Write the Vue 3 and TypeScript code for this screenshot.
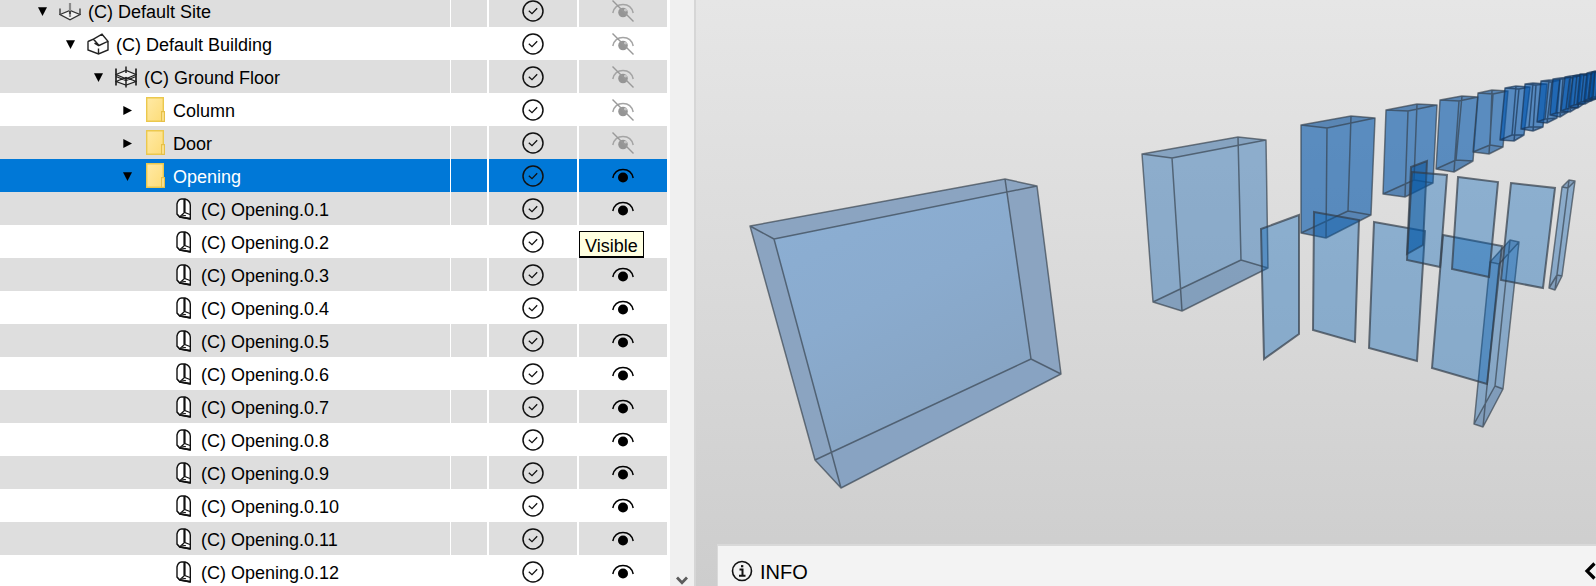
<script setup lang="ts">
import { onMounted, ref } from 'vue'

type Kind = 'site' | 'building' | 'floor' | 'folder' | 'opening'
type Point = [number, number]

interface Row {
  label: string
  level: number
  kind: Kind
  expanded?: boolean
  visible: boolean
  selected?: boolean
  hint?: string
}

const rows: Row[] = [
  { label: '(C) Default Site', level: 0, kind: 'site', expanded: true, visible: false },
  { label: '(C) Default Building', level: 1, kind: 'building', expanded: true, visible: false },
  { label: '(C) Ground Floor', level: 2, kind: 'floor', expanded: true, visible: false },
  { label: 'Column', level: 3, kind: 'folder', expanded: false, visible: false },
  { label: 'Door', level: 3, kind: 'folder', expanded: false, visible: false },
  { label: 'Opening', level: 3, kind: 'folder', expanded: true, visible: true, selected: true },
  ...Array.from({ length: 12 }, (_, i): Row => ({
    label: `(C) Opening.0.${i + 1}`,
    level: 4,
    kind: 'opening',
    visible: true,
    hint: i === 1 ? 'Visible' : undefined,
  })),
]

const tree = ref<HTMLElement | null>(null)
onMounted(() => {
  if (tree.value) tree.value.scrollTop = 6
})

// Corner order: left, front, right, back - first the top face, then the bottom face.
interface Box {
  top: [Point, Point, Point, Point]
  bottom: [Point, Point, Point, Point]
  tone: 'light' | 'deep' | 'far'
}

const boxes: Box[] = [
  { tone: 'light', top: [[1142, 154], [1172, 158], [1266, 140], [1238, 137]], bottom: [[1153, 302], [1182, 311], [1268, 268], [1241, 260]] },
  { tone: 'deep', top: [[1301, 125], [1327, 128], [1375, 118], [1351, 116]], bottom: [[1301, 233], [1326, 238], [1371, 215], [1348, 211]] },
  { tone: 'deep', top: [[1386, 110], [1408, 111], [1437, 105], [1417, 104]], bottom: [[1383, 194], [1405, 197], [1433, 183], [1414, 180]] },
  { tone: 'deep', top: [[1440, 100], [1459, 101], [1478, 97], [1462, 96]], bottom: [[1436, 169], [1454, 172], [1473, 161], [1456, 160]] },
  { tone: 'deep', top: [[1478, 93], [1493, 94], [1508, 91], [1492, 90]], bottom: [[1473, 152], [1489, 154], [1503, 147], [1490, 145]] },
  { tone: 'far', top: [[1505, 88], [1519, 89], [1530, 87], [1516, 86]], bottom: [[1500, 140], [1514, 141], [1524, 135], [1512, 135]] },
  { tone: 'far', top: [[1525, 84], [1536, 85], [1547, 84], [1533, 83]], bottom: [[1521, 129], [1533, 131], [1543, 127], [1529, 127]] },
  { tone: 'far', top: [[1541, 81], [1552, 82], [1560, 80], [1549, 80]], bottom: [[1537, 122], [1547, 123], [1557, 118], [1545, 119]] },
  { tone: 'far', top: [[1553, 79], [1563, 79], [1571, 77], [1560, 78]], bottom: [[1550, 115], [1560, 117], [1568, 112], [1556, 113]] },
  { tone: 'far', top: [[1565, 77], [1573, 78], [1581, 75], [1570, 76]], bottom: [[1561, 111], [1570, 112], [1578, 107], [1566, 109]] },
  { tone: 'far', top: [[1573, 76], [1581, 76], [1588, 74], [1577, 75]], bottom: [[1569, 107], [1578, 108], [1585, 103], [1574, 105]] },
  { tone: 'far', top: [[1580, 74], [1588, 75], [1595, 73], [1584, 74]], bottom: [[1577, 104], [1585, 104], [1592, 100], [1581, 102]] },
  { tone: 'far', top: [[1587, 73], [1594, 73], [1600, 71], [1591, 72]], bottom: [[1584, 101], [1591, 101], [1598, 98], [1588, 99]] },
  { tone: 'far', top: [[1592, 72], [1598, 72], [1604, 70], [1595, 71]], bottom: [[1589, 99], [1596, 99], [1602, 96], [1593, 97]] },
  { tone: 'light', top: [[1562, 187], [1568, 188], [1575, 181], [1569, 180]], bottom: [[1549, 288], [1555, 290], [1562, 276], [1557, 275]] },
  { tone: 'light', top: [[1490, 262], [1499, 264], [1519, 242], [1510, 240]], bottom: [[1474, 424], [1483, 427], [1503, 389], [1495, 386]] },
]

interface Panel {
  corners: Point[]
  dark?: boolean
}

const panels: Panel[] = [
  { corners: [[1261, 229], [1299, 215], [1299, 334], [1264, 359]] },
  { corners: [[1314, 212], [1359, 220], [1355, 342], [1313, 330]] },
  { corners: [[1374, 222], [1425, 231], [1417, 361], [1369, 348]] },
  { corners: [[1443, 235], [1502, 246], [1487, 384], [1432, 368]] },
  { corners: [[1411, 167], [1427, 161], [1423, 245], [1407, 254]], dark: true },
  { corners: [[1412, 172], [1447, 175], [1440, 267], [1407, 260]] },
  { corners: [[1458, 177], [1498, 182], [1489, 277], [1452, 269]] },
  { corners: [[1511, 183], [1555, 188], [1543, 288], [1501, 280]] },
]

const pts = (list: Point[]) => list.map((p) => p.join(',')).join(' ')

// Silhouette of a box seen from slightly above: everything outside the hidden edges.
const outline = (b: Box) =>
  pts([b.top[0], b.top[3], b.top[2], b.bottom[2], b.bottom[1], b.bottom[0]])

const edges = (b: Box) => {
  const ring = (f: Point[]) => 'M' + f.map((p) => p.join(' ')).join('L') + 'Z'
  return ring(b.top) + ring(b.bottom) + b.top.map((p, i) => `M${p.join(' ')}L${b.bottom[i].join(' ')}`).join('')
}
</script>

<template>
  <main class="app">
    <section class="side">
      <div ref="tree" class="tree">
        <table>
          <colgroup>
            <col class="c-name" />
            <col class="c-extra" />
            <col class="c-check" />
            <col class="c-eye" />
          </colgroup>
          <tbody>
            <tr v-for="row in rows" :key="row.label" :class="{ selected: row.selected }">
              <td>
                <div class="name" :class="'level-' + row.level">
                  <button v-if="row.expanded !== undefined" class="toggle" :aria-label="'Toggle ' + row.label" :aria-expanded="row.expanded">
                    <svg width="9" height="9" viewBox="0 0 9 9">
                      <path v-if="row.expanded" d="M0 0.3H9L4.5 9z" />
                      <path v-else d="M0.3 0V9L9 4.5z" />
                    </svg>
                  </button>
                  <span v-else class="toggle"></span>
                  <span class="kind">
                    <svg v-if="row.kind === 'site'" width="22" height="22" viewBox="0 0 22 22" fill="none">
                      <path d="M1 14.500L11 10.500 21 14.500 11 19.800z" fill="#f2f2f2" stroke="#333" stroke-width="1.300" />
                      <path d="M1 8.500V15M21 8.500V15" stroke="#444" stroke-width="1.500" />
                      <path d="M11 3V17" stroke="#8a8a8a" stroke-width="2.200" />
                      <path d="M11 11V14" stroke="#444" stroke-width="2" />
                    </svg>
                    <svg v-else-if="row.kind === 'building'" width="22" height="22" viewBox="0 0 22 22" fill="none" stroke="#222" stroke-width="1.400">
                      <path d="M1 8.500L6.500 6.200 12 12.500M6.500 6.200L15 1.200 21 8.300 12 12.500M1 8.300V17L11.500 21 21 17V8.300M11.500 15.500V21.800M7.500 10.200L12 12.800" />
                    </svg>
                    <svg v-else-if="row.kind === 'floor'" width="22" height="22" viewBox="0 0 22 22" fill="none" stroke="#222" stroke-width="1.300">
                      <path d="M1 8.500L11 4 21 8.500V15.500L11 19.500 1 15.500z" fill="#eee" stroke="none" />
                      <path d="M1 8.500L11 4.500 21 8.500 11 12.800zM1 10.500L11 14.500 21 10.500M1 15.500L11 11.500 21 15.500L11 19z" />
                      <path d="M1 2.500V19.500M21 2.500V19.500" stroke-width="1.700" />
                      <path d="M11 .5V7M11 12V21.500" stroke-width="1.500" />
                    </svg>
                    <svg v-else-if="row.kind === 'folder'" width="19" height="25" viewBox="0 0 19 25">
                      <defs>
                        <linearGradient id="paper" x1="0" y1="0" x2="1" y2="1">
                          <stop offset="0" stop-color="#ffeaa6" />
                          <stop offset="1" stop-color="#fddc78" />
                        </linearGradient>
                      </defs>
                      <path d="M.7.7H17.300V24.300H.7z" fill="url(#paper)" stroke="#ebc84d" stroke-width="1.400" />
                      <path d="M15.600 14.600H18.400V24.300H15.600z" fill="#ffe79b" stroke="#e6c048" stroke-width="1.200" />
                    </svg>
                    <svg v-else width="18" height="22" viewBox="-2 0 18 22" fill="none" stroke="#111">
                      <path d="M1 16V6Q2 1.200 5.500 1H9Q14 2.500 14.300 7V20.800L3.500 18.800z" fill="#fff" stroke-width="1.400" />
                      <path d="M8.500 1V14.500" stroke-width="2.200" />
                      <path d="M1 16L3.500 18.800 8.500 14.500 14 16.500M5.500 17L10 17.800" stroke-width="1.100" />
                      <path d="M3.500 18.800L14.500 20.800" stroke-width="1.800" />
                    </svg>
                  </span>
                  <span class="label">{{ row.label }}</span>
                </div>
              </td>
              <td></td>
              <td>
                <button class="icon" :aria-label="'Status of ' + row.label">
                  <svg width="22" height="22" viewBox="0 0 22 22" fill="none" stroke="#111">
                    <circle cx="11" cy="11" r="10" stroke-width="1.500" />
                    <path d="M6.800 10.800L10 13.700 15.200 8.300" stroke-width="1.300" />
                  </svg>
                </button>
              </td>
              <td class="eye">
                <button class="icon" :aria-label="'Visibility of ' + row.label">
                  <svg v-if="row.visible" width="22" height="22" viewBox="0 0 22 22">
                    <path d="M.8 13C2 7.800 6 4.600 11 4.600S20 7.800 21.200 13" fill="none" stroke="#000" stroke-width="1.500" />
                    <circle cx="11" cy="12.500" r="5" />
                  </svg>
                  <svg v-else width="22" height="22" viewBox="0 0 22 22">
                    <path d="M.8 13C2 7.800 6 4.600 11 4.600S20 7.800 21.200 13" fill="none" stroke="#a4a4a4" stroke-width="1.500" />
                    <circle cx="11" cy="12.500" r="4.800" fill="#959595" />
                    <circle cx="13.500" cy="10" r="1.600" fill="#c4c4c4" />
                    <path d="M.5.5L21.500 21.500" stroke="#999" stroke-width="1.400" />
                  </svg>
                </button>
                <span v-if="row.hint" class="tooltip" role="tooltip">{{ row.hint }}</span>
              </td>
            </tr>
          </tbody>
        </table>
      </div>
      <div class="scrollbar">
        <button class="scroll-down" aria-label="Scroll down">
          <svg width="12" height="10" viewBox="0 0 12 10" fill="none" stroke="#5c5c5c" stroke-width="2.800">
            <path d="M1 1.500L6 6.800 11 1.500" />
          </svg>
        </button>
      </div>
    </section>

    <section class="viewport">
      <svg class="scene" viewBox="696 0 900 586" preserveAspectRatio="xMinYMin slice" role="img" aria-label="3D view of openings">
        <defs>
          <linearGradient id="front" x1="0" y1="0" x2="0.500" y2="1">
            <stop offset="0" stop-color="#8cafd4" />
            <stop offset="0.500" stop-color="#8aabce" />
            <stop offset="1" stop-color="#86a3c2" />
          </linearGradient>
        </defs>
        <g class="large">
          <polygon class="strip" points="750,226 1005,179 1037,186 1061,374 841,488 815,460" />
          <polygon fill="url(#front)" points="774,239 1006,192 1031,359 831,452" />
          <polygon class="base" points="831,452 1031,359 1061,374 841,488" />
          <path class="edge" d="M750 226L774 239 1037 186 1005 179zM815 460L841 488 1061 374 1031 359zM750 226L815 460M774 239L841 488M1037 186L1061 374M1005 179L1031 359" />
        </g>
        <g v-for="(b, i) in boxes" :key="'b' + i" :class="b.tone">
          <polygon class="body" :points="outline(b)" />
          <polygon class="cap" :points="pts(b.top)" />
          <polygon class="cap" :points="pts(b.bottom)" />
          <path class="edge" :d="edges(b)" />
        </g>
        <polygon v-for="(p, i) in panels" :key="'p' + i" class="panel" :class="{ dark: p.dark }" :points="pts(p.corners)" />
      </svg>
      <header class="info">
        <svg width="22" height="22" viewBox="0 0 22 22" fill="none" stroke="#111">
          <circle cx="11" cy="11" r="9.500" stroke-width="1.600" />
          <path d="M8.500 9.500H11.500V15.500M8 15.700H14.500" stroke-width="2" />
          <path d="M10 6.200H12.300" stroke-width="2.200" />
        </svg>
        <h2>INFO</h2>
        <button class="collapse" aria-label="Expand info">
          <svg width="12" height="18" viewBox="0 0 12 18" fill="none" stroke="#000" stroke-width="3.200">
            <path d="M10.500 1.500L3 9 10.500 16.500" />
          </svg>
        </button>
      </header>
    </section>
  </main>
</template>

<style>
body {
  margin: 0;
}
</style>

<style scoped>
.app {
  display: flex;
  height: 100vh;
  overflow: hidden;
  background: #fff;
  color: #000;
  font: 18px/21px 'Liberation Sans', Arial, sans-serif;
}
button {
  display: flex;
  padding: 0;
  border: 0;
  background: none;
  color: inherit;
  font: inherit;
}
svg {
  display: block;
}
.side {
  display: flex;
  flex: none;
  border-right: 2px solid #d6d6d6;
}
.tree {
  overflow: hidden;
  padding-right: 3px;
}
table {
  width: 667px;
  table-layout: fixed;
  border-collapse: separate;
  border-spacing: 0;
}
.c-name {
  width: 451px;
}
.c-extra {
  width: 38px;
}
.c-check {
  width: 90px;
}
.c-eye {
  width: 88px;
}
td {
  height: 33px;
  padding: 0;
  border-right: 2px solid #fff;
}
td:first-child {
  border-right-width: 1px;
}
td:last-child {
  border-right: 0;
}
tr:nth-child(odd) td {
  background: #dedede;
}
tr.selected td {
  background: #0078d7;
}
.selected .label {
  color: #fff;
}
.name {
  display: flex;
  align-items: center;
  height: 33px;
}
.level-0 {
  padding-left: 38px;
}
.level-1 {
  padding-left: 66px;
}
.level-2 {
  padding-left: 94px;
}
.level-3 {
  padding-left: 123px;
}
.level-4 {
  padding-left: 151px;
}
.toggle {
  width: 9px;
  padding-top: 2px;
}
.kind {
  display: flex;
  justify-content: center;
  width: 22px;
  margin: 0 7px 0 12px;
}
.label {
  padding-top: 4px;
  white-space: nowrap;
}
.icon {
  margin: 0 auto;
}
.eye {
  position: relative;
}
.tooltip {
  position: absolute;
  top: 6px;
  left: 0;
  padding: 4px 5px 0;
  border: 1px solid #000;
  border-bottom-width: 2px;
  background: #ffffe1;
  line-height: 20px;
}
.scrollbar {
  display: flex;
  flex-direction: column;
  justify-content: flex-end;
  width: 24px;
  background: #f0f0f0;
}
.scroll-down {
  justify-content: center;
}
.viewport {
  display: grid;
  flex: 1;
  grid-template: 100% / 100%;
  min-width: 0;
  background: linear-gradient(#e6e6e6, #cdcdcd);
}
.scene {
  grid-area: 1 / 1;
  width: 100%;
  height: 100%;
}
.edge {
  fill: none;
  stroke: #333d48;
  stroke-opacity: 0.65;
  stroke-width: 1.5;
  stroke-linejoin: round;
}
.strip {
  fill: #8ba4c1;
}
.base {
  fill: #88a3c2;
}
.body {
  fill: rgba(0, 88, 170, 0.37);
}
.cap {
  fill: rgba(90, 90, 110, 0.12);
}
.deep .body {
  fill: rgba(0, 84, 168, 0.6);
}
.far .body {
  fill: rgba(0, 84, 172, 0.62);
}
.far .edge {
  stroke: #16304e;
}
.panel {
  fill: rgba(0, 96, 183, 0.37);
  stroke: #333d48;
  stroke-opacity: 0.7;
  stroke-width: 2;
}
.panel.dark {
  fill: rgba(0, 74, 146, 0.5);
}
.info {
  grid-area: 1 / 1;
  align-self: end;
  display: flex;
  align-items: flex-start;
  box-sizing: border-box;
  height: 42px;
  margin-left: 21px;
  padding: 14px 0 0 13px;
  border: solid #d9d9d9;
  border-width: 2px 0 0 1px;
  background: #f3f3f3;
}
.info h2 {
  margin: 2px 0 0 7px;
  font-size: 20px;
  font-weight: 400;
}
.collapse {
  margin: 2px 0 0 auto;
}
</style>
